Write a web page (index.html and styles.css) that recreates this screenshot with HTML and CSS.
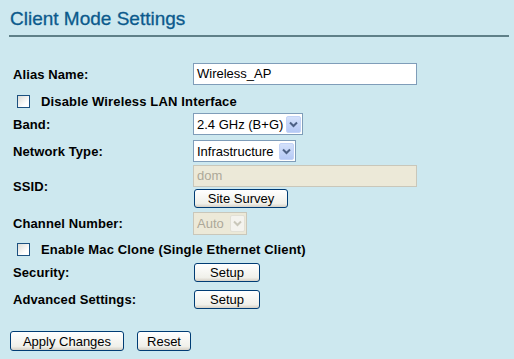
FILE: index.html
```html
<!DOCTYPE html>
<html lang="en">
<head>
  <meta charset="UTF-8" />
  <title>Client Mode Settings</title>
  <link rel="stylesheet" href="styles.css">
</head>
<body>
  <h1>Client Mode Settings</h1>
  <hr class="rule" />

  <div class="form">
    <div class="row alias-row">
      <div class="label">Alias Name:</div>
      <div class="field"><div class="text">Wireless_AP</div></div>
    </div>

    <div class="check-row disable-row">
      <span class="box"></span> Disable Wireless LAN Interface
    </div>

    <div class="row band-row">
      <div class="label">Band:</div>
      <div class="field">
        <div class="select band">
          <span class="value">2.4 GHz (B+G)</span>
          <span class="arrow"><svg width="9" height="7" viewBox="0 0 9 7"><path d="M1 1.5 L4.5 5 L8 1.5" fill="none" stroke="#4d6185" stroke-width="2"/></svg></span>
        </div>
      </div>
    </div>

    <div class="row net-row">
      <div class="label">Network Type:</div>
      <div class="field">
        <div class="select net">
          <span class="value">Infrastructure</span>
          <span class="arrow"><svg width="9" height="7" viewBox="0 0 9 7"><path d="M1 1.5 L4.5 5 L8 1.5" fill="none" stroke="#4d6185" stroke-width="2"/></svg></span>
        </div>
      </div>
    </div>

    <div class="row ssid-row">
      <div class="label">SSID:</div>
      <div class="field stack">
        <div class="text disabled">dom</div>
        <button class="btn survey">Site Survey</button>
      </div>
    </div>

    <div class="row chan-row">
      <div class="label">Channel Number:</div>
      <div class="field">
        <div class="select chan off">
          <span class="value">Auto</span>
          <span class="arrow"><svg width="9" height="7" viewBox="0 0 9 7"><path d="M1 1.5 L4.5 5 L8 1.5" fill="none" stroke="#c9c7ba" stroke-width="2"/></svg></span>
        </div>
      </div>
    </div>

    <div class="check-row mac-row">
      <span class="box"></span> Enable Mac Clone (Single Ethernet Client)
    </div>

    <div class="row sec-row">
      <div class="label">Security:</div>
      <div class="field"><button class="btn setup">Setup</button></div>
    </div>

    <div class="row adv-row">
      <div class="label">Advanced Settings:</div>
      <div class="field"><button class="btn setup">Setup</button></div>
    </div>
  </div>

  <div class="actions">
    <button class="btn apply">Apply Changes</button>
    <button class="btn reset">Reset</button>
  </div>
</body>
</html>
```

FILE: styles.css
```css
body {
  margin: 0;
  padding: 8px 5px 0 10px;
  background: #cde8ef;
  font-family: "Liberation Sans", Arial, sans-serif;
  font-size: 13px;
  color: #000;
}

h1 {
  margin: 0;
  font-size: 19px;
  font-weight: normal;
  color: #0b5a8c;
  line-height: 22px;
  -webkit-text-stroke: 0.3px #0b5a8c;
}

.rule {
  margin: 5px 0 0 -1px;
  border: none;
  height: 2px;
  background: #5f8088;
}

.form {
  padding-left: 3px;
}

.row {
  display: grid;
  grid-template-columns: 180px 1fr;
  align-items: center;
}

.label {
  font-weight: bold;
  letter-spacing: 0.1px;
}

.check-row {
  display: flex;
  align-items: center;
  gap: 11px;
  padding-left: 4px;
  font-weight: bold;
  letter-spacing: 0.15px;
  height: 14px;
}

/* spacing between rows, tuned to the screenshot */
.alias-row { height: 22px; margin-top: 26px; }
.disable-row { margin-top: 9px; }
.band-row { height: 20px; margin-top: 5px; }
.net-row { height: 20px; margin-top: 7px; }
.ssid-row { height: 44px; margin-top: 4px; }
.chan-row { height: 22px; margin-top: 4px; }
.mac-row { margin-top: 8px; }
.sec-row { height: 20px; margin-top: 6px; }
.adv-row { height: 20px; margin-top: 7px; }

.box {
  width: 11px;
  height: 11px;
  border: 1px solid #1c5180;
  background: linear-gradient(135deg, #dcdcd6, #ffffff 70%);
}

.text {
  width: 219px;
  height: 20px;
  border: 1px solid #7f9db9;
  background: #fff;
  padding-left: 3px;
  line-height: 20px;
}

.text.disabled {
  background: #ece9d8;
  border-color: #c9c7ba;
  color: #aca899;
}

.select {
  display: flex;
  align-items: center;
  justify-content: space-between;
  height: 18px;
  border: 1px solid #7f9db9;
  background: #fff;
  padding: 1px 1px 1px 3px;
}

.band { width: 104px; }
.net { width: 97px; }
.chan { width: 48px; height: 19px; }

.arrow {
  display: flex;
  align-items: center;
  justify-content: center;
  width: 15px;
  height: 17px;
  border-radius: 2px;
  background: linear-gradient(#d4e1fb, #b5c9f5);
  border: 1px solid #c3d3f7;
  box-sizing: border-box;
}

.select.off {
  background: #ece9d8;
  border-color: #c9c7ba;
  color: #aca899;
}

.select.off .arrow {
  background: #f4f3ee;
  border-color: #e2e0d6;
}

.stack {
  display: flex;
  flex-direction: column;
  gap: 2px;
}

.btn {
  font-family: "Liberation Sans", Arial, sans-serif;
  font-size: 13px;
  height: 19px;
  padding: 0;
  border: 1px solid #003c74;
  border-radius: 3px;
  background: linear-gradient(#ffffff, #f0f0ea 80%, #d6d0c5);
  color: #000;
  margin-left: 1px;
}

.survey { width: 94px; }
.setup { width: 66px; }

.actions {
  display: flex;
  gap: 12px;
  margin-top: 22px;
}

.apply {
  width: 114px;
  height: 20px;
  margin-left: 0;
}

.reset {
  width: 54px;
  height: 20px;
}
```
